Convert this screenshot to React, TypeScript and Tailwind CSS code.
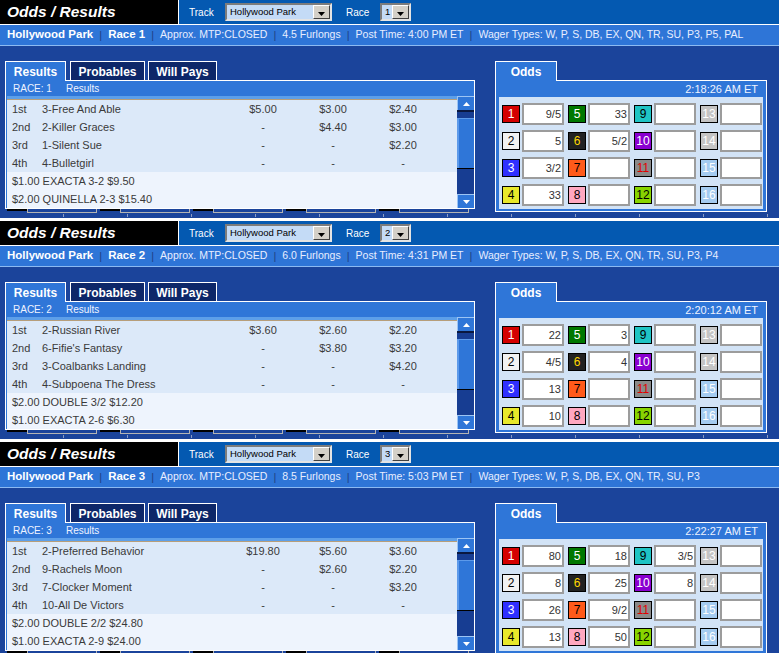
import React from "react";

type Finish = { place: string; horse: string; win: string; plc: string; show: string };

type Race = {
  race: number;
  distance: string;
  post: string;
  wagers: string;
  results: Finish[];
  exotics: string[];
  time: string;
  odds: string[];
};

const races: Race[] = [
  {
    race: 1,
    distance: "4.5 Furlongs",
    post: "4:00 PM ET",
    wagers: "W, P, S, DB, EX, QN, TR, SU, P3, P5, PAL",
    results: [
      { place: "1st", horse: "3-Free And Able", win: "$5.00", plc: "$3.00", show: "$2.40" },
      { place: "2nd", horse: "2-Killer Graces", win: "-", plc: "$4.40", show: "$3.00" },
      { place: "3rd", horse: "1-Silent Sue", win: "-", plc: "-", show: "$2.20" },
      { place: "4th", horse: "4-Bulletgirl", win: "-", plc: "-", show: "-" },
    ],
    exotics: ["$1.00 EXACTA 3-2 $9.50", "$2.00 QUINELLA 2-3 $15.40"],
    time: "2:18:26 AM ET",
    odds: ["9/5", "5", "3/2", "33", "33", "5/2", "", "", "", "", "", "", "", "", "", ""],
  },
  {
    race: 2,
    distance: "6.0 Furlongs",
    post: "4:31 PM ET",
    wagers: "W, P, S, DB, EX, QN, TR, SU, P3, P4",
    results: [
      { place: "1st", horse: "2-Russian River", win: "$3.60", plc: "$2.60", show: "$2.20" },
      { place: "2nd", horse: "6-Fifie's Fantasy", win: "-", plc: "$3.80", show: "$3.20" },
      { place: "3rd", horse: "3-Coalbanks Landing", win: "-", plc: "-", show: "$4.20" },
      { place: "4th", horse: "4-Subpoena The Dress", win: "-", plc: "-", show: "-" },
    ],
    exotics: ["$2.00 DOUBLE 3/2 $12.20", "$1.00 EXACTA 2-6 $6.30"],
    time: "2:20:12 AM ET",
    odds: ["22", "4/5", "13", "10", "3", "4", "", "", "", "", "", "", "", "", "", ""],
  },
  {
    race: 3,
    distance: "8.5 Furlongs",
    post: "5:03 PM ET",
    wagers: "W, P, S, DB, EX, QN, TR, SU, P3",
    results: [
      { place: "1st", horse: "2-Preferred Behavior", win: "$19.80", plc: "$5.60", show: "$3.60" },
      { place: "2nd", horse: "9-Rachels Moon", win: "-", plc: "$2.60", show: "$2.20" },
      { place: "3rd", horse: "7-Clocker Moment", win: "-", plc: "-", show: "$3.20" },
      { place: "4th", horse: "10-All De Victors", win: "-", plc: "-", show: "-" },
    ],
    exotics: ["$2.00 DOUBLE 2/2 $24.80", "$1.00 EXACTA 2-9 $24.00"],
    time: "2:22:27 AM ET",
    odds: ["80", "8", "26", "13", "18", "25", "9/2", "50", "3/5", "8", "", "", "", "", "", ""],
  },
];

// saddle cloth colours, program numbers 1-16
const saddle = [
  "bg-[#d40000] text-white",
  "bg-[#f2f2f2] text-black",
  "bg-[#2f2fff] text-white",
  "bg-[#e8e82a] text-black",
  "bg-[#007800] text-white",
  "bg-[#222222] text-[#ffd800]",
  "bg-[#ff5a1a] text-black",
  "bg-[#ffa8c0] text-black",
  "bg-[#1fc4c4] text-black",
  "bg-[#8a00d0] text-white",
  "bg-[#8a8a8a] text-[#e00000]",
  "bg-[#88d400] text-black",
  "bg-[#c4c4c4] text-white",
  "bg-[#c4c4c4] text-white",
  "bg-[#a4cbf0] text-white",
  "bg-[#a4cbf0] text-white",
];

function Arrow({ up, color = "#000" }: { up?: boolean; color?: string }) {
  return (
    <svg width="7" height="4" viewBox="0 0 7 4">
      <path d={up ? "M0 4h7L3.5 0z" : "M0 0h7L3.5 4z"} fill={color} />
    </svg>
  );
}

function Select({ value, w }: { value: string; w: string }) {
  return (
    <div
      className={`flex h-[18px] items-center border-2 border-t-[#7c7c7c] border-l-[#7c7c7c] border-r-[#e4e4e4] border-b-[#e4e4e4] bg-[#c4dbf6] ${w}`}
    >
      <span className="flex-1 truncate pl-[3px] text-[9.5px] leading-none text-black">{value}</span>
      <span className="flex h-[14px] w-[17px] items-end justify-center border border-t-white border-l-white border-r-[#404040] border-b-[#404040] bg-[#d4d0c8] pb-[2px]">
        <Arrow />
      </span>
    </div>
  );
}

function Sep() {
  return <span className="mx-[6px] text-[11px] text-[#1f3f86]">|</span>;
}

function Tab({ label, active, w, className = "" }: { label: string; active?: boolean; w: string; className?: string }) {
  return (
    <div
      className={`relative z-10 -mb-px flex h-[20px] items-center justify-center pt-[1px] text-[12px] font-bold text-white ${w} ${className} ${
        active ? "border border-b-0 border-white bg-[#2f76d8]" : "border border-white bg-[#0d2769]"
      }`}
    >
      {label}
    </div>
  );
}

function Scrollbar() {
  return (
    <div className="flex w-[17px] flex-col bg-[#173d92]">
      <div className="flex h-[14px] items-center justify-center border-t border-l border-[#9cc4f4] bg-[#2f76d8]">
        <Arrow up color="#fff" />
      </div>
      <div className="h-[2px] bg-[#0a1840]" />
      <div className="h-[6px]" />
      <div className="h-[50px] border-l-2 border-t border-[#5d9aea] bg-[#2f76d8]" />
      <div className="h-px bg-black" />
      <div className="flex-1" />
      <div className="flex h-[14px] items-center justify-center border-t border-l border-[#9cc4f4] bg-[#2f76d8]">
        <Arrow color="#fff" />
      </div>
    </div>
  );
}

function Results({ r }: { r: Race }) {
  return (
    <div className="w-[470px]">
      <div className="flex items-end">
        <Tab label="Results" active w="w-[61px]" />
        <Tab label="Probables" w="w-[75px]" className="ml-[4px]" />
        <Tab label="Will Pays" w="w-[69px]" className="ml-[3px]" />
      </div>
      <div className="border border-white">
        <div className="flex h-[15px] items-center bg-[#2f76d8] pl-[7px] text-[10px] text-[#eef3ff]">
          <span className="w-[53px]">RACE: {r.race}</span>
          <span>Results</span>
        </div>
        <div className="flex bg-[#2f76d8] pl-[1px]">
          <div className="flex-1 text-[11px] text-[#3a3a3a]">
            <div className="h-[3px] bg-[#5d9fe9]" />
            <div className="h-px bg-[#b79e7a]" />
            {r.results.map((f) => (
              <div
                key={f.place}
                className="grid h-[18px] grid-cols-[30px_186px_70px_70px_70px] items-center bg-[#dce9f9] pl-[5px]"
              >
                <span>{f.place}</span>
                <span className="whitespace-nowrap">{f.horse}</span>
                <span className="text-center">{f.win}</span>
                <span className="text-center">{f.plc}</span>
                <span className="text-center">{f.show}</span>
              </div>
            ))}
            {r.exotics.map((e) => (
              <div key={e} className="flex h-[18px] items-center bg-[#eef4fd] pl-[5px]">
                {e}
              </div>
            ))}
          </div>
          <Scrollbar />
        </div>
      </div>
      <div className="flex h-[4px] pl-[2px]">
        {[0, 1, 2, 3, 4].map((i) => (
          <React.Fragment key={i}>
            <div className="h-[2px] w-[20px] bg-black" />
            <div className="w-[70px] border-x border-b border-[#b4b4b4]" />
            <div className="w-[3px]" />
          </React.Fragment>
        ))}
      </div>
    </div>
  );
}

function Odds({ r }: { r: Race }) {
  return (
    <div className="ml-[20px] w-[272px]">
      <div className="flex items-end">
        <Tab label="Odds" active w="w-[62px]" />
      </div>
      <div className="border border-white bg-[#2f76d8]">
        <div className="flex h-[16px] items-center justify-end pr-[8px] text-[11px] text-[#eef3ff]">{r.time}</div>
        <div className="mx-[3px] mb-[2px] h-[112px] bg-[#d2e3f6] pl-[3px] pt-[6px]">
          <div className="grid grid-flow-col grid-cols-[62px_62px_62px_62px] grid-rows-4 gap-x-[4px] gap-y-[5px]">
            {r.odds.map((o, i) => (
              <div key={i} className="flex h-[22px] items-center gap-[2px]">
                <div
                  className={`flex h-[18px] w-[18px] items-center justify-center border border-black text-[12px] leading-none ${saddle[i]}`}
                >
                  {i + 1}
                </div>
                <div className="flex h-[22px] w-[42px] items-center justify-end border-2 border-[#9c9c9c] bg-white pr-[1px] text-[11px] text-[#333]">
                  {o}
                </div>
              </div>
            ))}
          </div>
        </div>
      </div>
    </div>
  );
}

function Section({ r }: { r: Race }) {
  return (
    <section className="border-b-[3px] border-white">
      <div className="flex h-[25px] border-b border-white">
        <div className="flex w-[178px] items-center bg-black pl-[7px] text-[15.5px] font-bold italic text-white">
          Odds / Results
        </div>
        <div className="flex flex-1 items-center border-l border-white bg-[#0459b1]">
          <span className="ml-[10px] w-[36px] text-[10px] text-white">Track</span>
          <Select value="Hollywood Park" w="w-[107px]" />
          <span className="ml-[14px] w-[34px] text-[10px] text-white">Race</span>
          <Select value={String(r.race)} w="w-[31px]" />
        </div>
      </div>
      <div className="flex h-[21px] items-center whitespace-nowrap border-b border-[#8cbaf2] bg-[#2e75d7] pl-[7px] text-[10.5px] text-[#e8eeff]">
        <span className="text-[11.5px] font-bold text-white">Hollywood Park</span>
        <Sep />
        <span className="text-[11.5px] font-bold text-white">Race {r.race}</span>
        <Sep />
        <span>Approx. MTP:CLOSED</span>
        <Sep />
        <span>{r.distance}</span>
        <Sep />
        <span>Post Time: {r.post}</span>
        <Sep />
        <span>Wager Types: {r.wagers}</span>
      </div>
      <div className="flex h-[172px] flex-col bg-[#1b449b]">
        <div className="flex pl-[5px] pt-[15px]">
          <Results r={r} />
          <Odds r={r} />
        </div>
        <div className="mb-px mt-auto h-[3px] bg-[repeating-linear-gradient(90deg,transparent_0_63px,#8c9cc4_63px_64px)]" />
      </div>
    </section>
  );
}

export default function App() {
  return (
    <div className="w-[779px] overflow-hidden bg-white font-['Liberation_Sans',Arial,sans-serif]">
      {races.map((r) => (
        <Section key={r.race} r={r} />
      ))}
    </div>
  );
}
